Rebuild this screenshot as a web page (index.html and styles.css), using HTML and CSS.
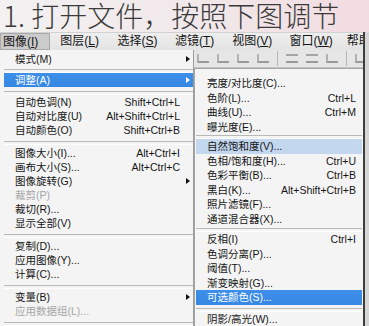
FILE: index.html
```html
<!DOCTYPE html>
<html lang="zh-CN">
<head>
  <meta charset="UTF-8">
  <title>图像 - 调整</title>
  <link rel="stylesheet" href="styles.css">
</head>
<body>

  <h1 class="title">1. 打开文件，按照下图调节</h1>

  <div class="app">
    <div class="window">
      <nav class="menubar">
        <span class="bar-item active">图像(<u>I</u>)</span>
        <span class="bar-item">图层(<u>L</u>)</span>
        <span class="bar-item">选择(<u>S</u>)</span>
        <span class="bar-item">滤镜(<u>T</u>)</span>
        <span class="bar-item">视图(<u>V</u>)</span>
        <span class="bar-item">窗口(<u>W</u>)</span>
        <span class="bar-item last">帮助</span>
      </nav>

      <div class="workspace">
        <!-- Image menu -->
        <ul class="menu main-menu">
          <li class="item"><span>模式(M)</span><span></span><i class="arrow"></i></li>
          <li class="sep sep-a"></li>
          <li class="item selected"><span>调整(A)</span><span></span><i class="arrow"></i></li>
          <li class="sep sep-b"></li>
          <li class="item"><span>自动色调(N)</span><span>Shift+Ctrl+L</span></li>
          <li class="item"><span>自动对比度(U)</span><span>Alt+Shift+Ctrl+L</span></li>
          <li class="item"><span>自动颜色(O)</span><span>Shift+Ctrl+B</span></li>
          <li class="sep"></li>
          <li class="item"><span>图像大小(I)...</span><span>Alt+Ctrl+I</span></li>
          <li class="item"><span>画布大小(S)...</span><span>Alt+Ctrl+C</span></li>
          <li class="item"><span>图像旋转(G)</span><span></span><i class="arrow"></i></li>
          <li class="item disabled"><span>裁剪(P)</span></li>
          <li class="item"><span>裁切(R)...</span></li>
          <li class="item"><span>显示全部(V)</span></li>
          <li class="sep"></li>
          <li class="item"><span>复制(D)...</span></li>
          <li class="item"><span>应用图像(Y)...</span></li>
          <li class="item"><span>计算(C)...</span></li>
          <li class="sep"></li>
          <li class="item"><span>变量(B)</span><span></span><i class="arrow"></i></li>
          <li class="item disabled"><span>应用数据组(L)...</span></li>
          <li class="sep"></li>
        </ul>

        <div class="side">
          <div class="toolbar">
            <i class="tool"></i><i class="tool"></i><i class="tool"></i><i class="tool"></i>
            <b class="tool-sep"></b>
            <i class="tool wide"></i><i class="tool wide"></i><i class="tool"></i>
            <b class="tool-sep"></b>
            <i class="tool"></i>
          </div>

          <!-- Adjustments submenu -->
          <ul class="menu submenu">
            <li class="item"><span>亮度/对比度(C)...</span></li>
            <li class="item"><span>色阶(L)...</span><span>Ctrl+L</span></li>
            <li class="item"><span>曲线(U)...</span><span>Ctrl+M</span></li>
            <li class="item"><span>曝光度(E)...</span></li>
            <li class="sep sep-c"></li>
            <li class="item hover"><span>自然饱和度(V)...</span></li>
            <li class="item"><span>色相/饱和度(H)...</span><span>Ctrl+U</span></li>
            <li class="item"><span>色彩平衡(B)...</span><span>Ctrl+B</span></li>
            <li class="item"><span>黑白(K)...</span><span>Alt+Shift+Ctrl+B</span></li>
            <li class="item"><span>照片滤镜(F)...</span></li>
            <li class="item"><span>通道混合器(X)...</span></li>
            <li class="sep sep-d"></li>
            <li class="item"><span>反相(I)</span><span>Ctrl+I</span></li>
            <li class="item"><span>色调分离(P)...</span></li>
            <li class="item"><span>阈值(T)...</span></li>
            <li class="item"><span>渐变映射(G)...</span></li>
            <li class="item selected"><span>可选颜色(S)...</span></li>
            <li class="sep sep-e"></li>
            <li class="item"><span>阴影/高光(W)...</span></li>
          </ul>
        </div>
      </div>
    </div>

    <div class="edge"></div>
  </div>

</body>
</html>
```

FILE: styles.css
```css
* { box-sizing: border-box; margin: 0; padding: 0; }

body {
  width: 369px;
  height: 326px;
  overflow: hidden;
  font-family: 'Liberation Sans', 'Noto Sans CJK SC', sans-serif;
  font-size: 10.5px;
  color: #141414;
  background: #f1f1f1;
}

.title {
  height: 32px;
  padding-left: 3px;
  font-family: 'Noto Sans CJK SC', sans-serif;
  font-size: 28px;
  font-weight: 300;
  line-height: 30px;
  color: #3a3a3a;
  white-space: nowrap;
  background: linear-gradient(to right, #f3f1f1, #f1e8ea 55%, #f2dce1);
}

.app {
  display: flex;
  height: 294px;
}

.window {
  width: 363px;
  flex: none;
}

.menubar {
  height: 18px;
  display: grid;
  grid-template-columns: repeat(6, 57.3px) 1fr;
  background: linear-gradient(#eeeeee, #e3e3e3);
  border-top: 1px solid #d2d2d2;
  font-size: 12px;
  line-height: 16px;
  white-space: nowrap;
}

.bar-item {
  padding-left: 3px;
  overflow: hidden;
}

.bar-item.active {
  width: 50px;
  background: #cbcbcb;
  border: 1px solid #a9a9a9;
  padding-left: 2px;
}

.workspace {
  display: flex;
  height: 276px;
  background: #d8d8d8;
}

.menu { list-style: none; }

.main-menu {
  width: 194px;
  flex: none;
  padding: 2px 0 0 4px;
  background: #f4f4f4;
  border-right: 1px solid #9d9d9d;
}

.item {
  height: 14px;
  line-height: 14px;
  display: grid;
  white-space: nowrap;
}

.main-menu .item {
  grid-template-columns: 1fr auto 13px;
  padding-left: 11px;
}

.item.selected {
  background: linear-gradient(#3e8fe9, #3587e3);
  color: #fff;
}

.item.hover {
  background: #c3d7ef;
}

.item.disabled { color: #a6a6a6; }

.arrow {
  align-self: center;
  justify-self: end;
  margin-right: 3px;
  width: 0;
  height: 0;
  border-left: 4px solid #111;
  border-top: 3.5px solid transparent;
  border-bottom: 3.5px solid transparent;
}

.selected .arrow { border-left-color: #fff; }

.sep {
  height: 9px;
  padding-top: 4px;
}

.sep::before {
  content: '';
  display: block;
  height: 2px;
  border-top: 1px solid #b9b9b9;
  border-bottom: 1px solid #ffffff;
}

.sep-a { height: 7px; padding-top: 3px; }
.sep-b { height: 8px; padding-top: 4px; }
.sep-c { height: 5px; padding-top: 1px; }
.sep-d { height: 6px; padding-top: 2px; }
.sep-e { height: 7px; padding-top: 3px; }

.side {
  width: 169px;
  min-width: 0;
  flex: none;
  display: flex;
  flex-direction: column;
}

.toolbar {
  height: 20px;
  display: flex;
  align-items: center;
  gap: 8px;
  padding-left: 3px;
  overflow: hidden;
  background: #e6e6e6;
  border-bottom: 1px solid #c4c4c4;
}

.tool {
  flex: none;
  width: 12px;
  height: 9px;
  border-bottom: 2px solid #9a9a9a;
  border-left: 2px solid #b1b1b1;
}

.tool.wide {
  border-left: none;
  border-top: 2px solid #a5a5a5;
}

.tool-sep {
  flex: none;
  width: 1px;
  height: 15px;
  background: #b5b5b5;
}

.submenu {
  flex: 1;
  padding: 7px 1px 0 1px;
  background: #f4f4f4;
  border-left: 1px solid #a5a5a5;
  border-top: 1px solid #a5a5a5;
}

.submenu .item {
  grid-template-columns: 1fr auto;
  padding: 0 6px 0 11px;
  height: 14.5px;
  line-height: 14.5px;
}

.edge {
  flex: 1;
  border-left: 2px solid #3e3e3e;
  background: #d6d6d6;
}
```
